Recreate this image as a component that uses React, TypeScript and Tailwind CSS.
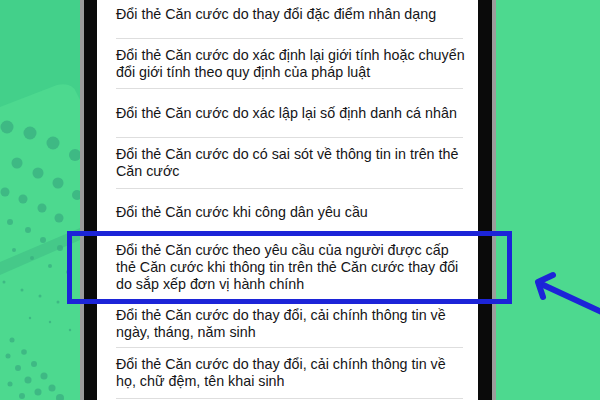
import React from "react";

const rows: { lines: string[]; h: string }[] = [
  { lines: ["Đổi thẻ Căn cước do thay đổi đặc điểm nhân dạng"], h: "h-[49px]" },
  {
    lines: [
      "Đổi thẻ Căn cước do xác định lại giới tính hoặc chuyển",
      "đổi giới tính theo quy định của pháp luật",
    ],
    h: "h-[50px]",
  },
  { lines: ["Đổi thẻ Căn cước do xác lập lại số định danh cá nhân"], h: "h-[49px]" },
  {
    lines: ["Đổi thẻ Căn cước do có sai sót về thông tin in trên thẻ", "Căn cước"],
    h: "h-[51px]",
  },
  { lines: ["Đổi thẻ Căn cước khi công dân yêu cầu"], h: "h-[47px]" },
  {
    lines: [
      "Đổi thẻ Căn cước theo yêu cầu của người được cấp",
      "thẻ Căn cước khi thông tin trên thẻ Căn cước thay đổi",
      "do sắp xếp đơn vị hành chính",
    ],
    h: "h-[64px]",
  },
  {
    lines: ["Đổi thẻ Căn cước do thay đổi, cải chính thông tin về", "ngày, tháng, năm sinh"],
    h: "h-[48px]",
  },
  {
    lines: ["Đổi thẻ Căn cước do thay đổi, cải chính thông tin về", "họ, chữ đệm, tên khai sinh"],
    h: "h-[51px]",
  },
];

const bigDots: [number, number, number][] = [
  [7, 127, 6.5], [30, 133, 6.5], [53, 143, 6.5], [75, 155, 6],
  [17, 163, 5.5], [38, 173, 5.5], [58, 183, 5.5], [77, 195, 5],
  [5, 192, 4.5], [23, 199, 4.5], [42, 208, 4.5], [59, 218, 4.5],
  [10, 222, 3], [28, 230, 3], [43, 240, 3], [60, 248, 3],
  [14, 250, 2], [32, 258, 2], [50, 266, 2], [68, 272, 2],
  [4, 282, 1.5], [22, 290, 1.5], [40, 296, 1.5], [58, 302, 1.5],
  [30, 318, 1.2], [50, 322, 1.2], [70, 330, 1.2],
  [12, 340, 2.5], [8, 356, 2.5], [24, 352, 2.8], [18, 368, 3], [34, 364, 3],
  [28, 380, 3.5], [44, 376, 3.5], [38, 392, 3.5], [52, 388, 3.5], [60, 398, 4],
  [10, 384, 2.5], [22, 396, 3],
];

export default function App() {
  return (
    <div className="relative w-[600px] h-[400px] overflow-hidden bg-[#4dd98f] flex" style={{ fontFamily: '"Liberation Sans", Arial, sans-serif' }}>
      {/* left decorative background */}
      <div className="w-[80px] h-full shrink-0">
        <svg width="80" height="400" viewBox="0 0 80 400">
          <rect x="0" y="0" width="80" height="400" fill="#43d08a" />
          <path d="M0 107 L57 85 Q72 82 76 92 L80 100 L80 400 L0 400 Z" fill="#4dd98f" />
          <path d="M0 262 L80 228 L80 240 L0 275 Z" fill="#45c989" />
          {bigDots.map(([cx, cy, r], i) => (
            <circle key={i} cx={cx} cy={cy} r={r} fill="#3aae80" opacity="0.75" />
          ))}
        </svg>
      </div>

      {/* phone */}
      <div className="w-[416px] h-full shrink-0 border-l-4 border-r-4 border-[#9c9c9c] bg-[#0a0a0a] pl-[13px] pr-[14px]">
        <div className="h-full bg-white overflow-hidden">
          <div className="-mt-[10px] flex flex-col">
            {rows.map((r, i) => (
              <div
                key={i}
                className={`${r.h} ml-[19px] mr-[15px] border-b border-[#dedede] flex flex-col justify-center text-[14.3px] leading-[17px] text-[#151517]`}
              >
                {r.lines.map((l, j) => (
                  <div key={j} className="whitespace-nowrap">
                    {l}
                  </div>
                ))}
              </div>
            ))}
          </div>
        </div>
      </div>

      <div className="flex-1" />

      {/* highlight box */}
      <div className="absolute left-[67px] top-[231px] w-[445px] h-[73px] border-[5px] border-[#1c24d8]" />

      {/* arrow */}
      <svg className="absolute left-0 top-0" width="600" height="400" viewBox="0 0 600 400">
        <g stroke="#1c24d8" strokeWidth="6" strokeLinecap="round" strokeLinejoin="round" fill="none">
          <path d="M606 314 L539 283" />
          <path d="M553 275 L538 282 L543 297" />
        </g>
      </svg>
    </div>
  );
}
